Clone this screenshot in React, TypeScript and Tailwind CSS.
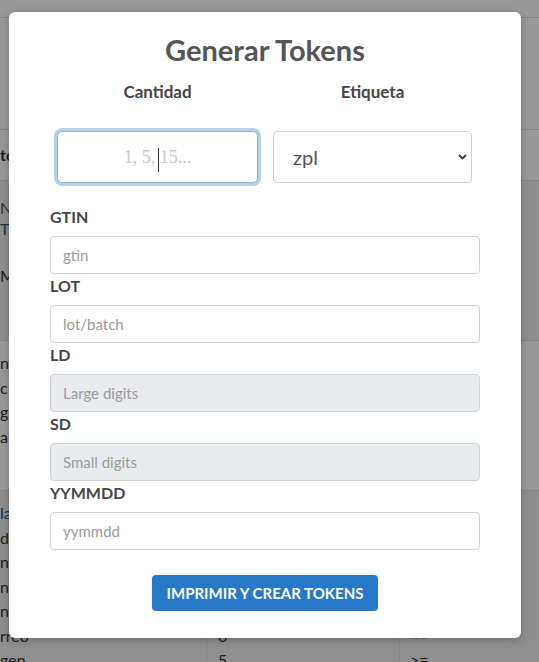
import React from "react";

// ============================================
// Generar Tokens modal over a dimmed table page
// ============================================

const Line: React.FC<{ children?: React.ReactNode; className?: string }> = ({
  children,
  className,
}) => <div className={`h-[24.5px] leading-[24.5px] ${className ?? ""}`}>{children}</div>;

const Field: React.FC<{
  label: string;
  placeholder: string;
  disabled?: boolean;
}> = ({ label, placeholder, disabled }) => (
  <div>
    <label className="block text-[16px] leading-[24px] font-bold text-[#454545] mb-[7px]">
      {label}
    </label>
    <input
      type="text"
      placeholder={placeholder}
      disabled={disabled}
      className={`block w-full h-[38px] rounded-[4px] border border-[#ced4da] px-[12px] text-[15px] text-[#495057] placeholder:text-[#9a9a9a] outline-none ${
        disabled ? "bg-[#e9ecef]" : "bg-white"
      }`}
    />
  </div>
);

export default function App() {
  return (
    <div className="relative h-[662px] w-full overflow-hidden bg-white font-['Lato',sans-serif] text-[16px] text-[#333]">
      {/* Página de fondo (tabla) */}
      <div className="flex flex-col">
        <div className="h-[18px] border-b border-[#dedede]" />
        <div className="h-[112px] border-b border-[#dedede]" />
        <div className="h-[51px] border-b border-[#dedede] flex items-center font-bold">
          to
        </div>
        <div className="h-[160px] border-b border-[#dedede] bg-[#eeeeee] pt-[16px]">
          <div className="leading-[21px] text-[#555]">N</div>
          <div className="leading-[21px] text-[#1f4f8f]">T</div>
          <div className="leading-[21px] mt-[26px]">MN</div>
        </div>
        <div className="h-[150px] border-b border-[#dedede] pt-[10px]">
          <Line>n</Line>
          <Line>c</Line>
          <Line>g</Line>
          <Line>a</Line>
        </div>
        <div className="flex bg-[#eeeeee] pt-[10px] h-[200px]">
          <div className="w-[207px] border-r border-[#dedede]">
            <Line className="text-[#1f4f8f]">la</Line>
            <Line>d</Line>
            <Line>nt</Line>
            <Line>nt</Line>
            <Line>nt</Line>
            <Line>rreo</Line>
            <Line>gen</Line>
          </div>
          <div className="w-[193px] border-r border-[#dedede] pl-[11px]">
            <Line>1</Line>
            <Line>1</Line>
            <Line>1</Line>
            <Line>1</Line>
            <Line>1</Line>
            <Line>0</Line>
            <Line>5</Line>
          </div>
          <div className="flex-1 pl-[10px]">
            <Line>==</Line>
            <Line>==</Line>
            <Line>==</Line>
            <Line>==</Line>
            <Line>==</Line>
            <Line>==</Line>
            <Line>&gt;=</Line>
          </div>
        </div>
      </div>

      {/* Overlay + modal */}
      <div className="absolute inset-0 bg-black/40">
        <div className="ml-[9px] mt-[12px] w-[512px] h-[626px] rounded-[6px] bg-white shadow-[0_2px_8px_rgba(0,0,0,0.25)] px-[41px] pt-[21px]">
          <h2 className="text-center text-[29px] leading-[34px] font-bold text-[#555]">
            Generar Tokens
          </h2>

          <div className="mt-[13px] grid grid-cols-2">
            <div className="px-[7px]">
              <div className="text-center text-[17px] leading-[24px] font-bold text-[#454545]">
                Cantidad
              </div>
              <div className="relative mt-[27px]">
                <input
                  type="text"
                  placeholder="1, 5, 15..."
                  className="block w-full h-[52px] rounded-[5px] border border-[#8fb6d8] ring-[3px] ring-[#b6d0e6] bg-white text-center text-[18px] font-['Liberation_Serif',serif] placeholder:text-[#c8c8c8] outline-none"
                />
                <span className="absolute left-[101px] top-[17px] h-[24px] w-px bg-[#333]" />
              </div>
            </div>
            <div className="px-[8px]">
              <div className="text-center text-[17px] leading-[24px] font-bold text-[#454545]">
                Etiqueta
              </div>
              <div className="relative mt-[27px]">
                <select
                  defaultValue="zpl"
                  className="block w-full h-[52px] appearance-none rounded-[4px] border border-[#ced4da] bg-white pl-[19px] text-[20px] text-[#555] outline-none"
                >
                  <option value="zpl">zpl</option>
                  <option value="pdf">pdf</option>
                </select>
                <svg
                  className="pointer-events-none absolute right-[5px] top-[23px]"
                  width="9"
                  height="6"
                  viewBox="0 0 9 6"
                  fill="none"
                >
                  <path d="M1 1l3.5 3.5L8 1" stroke="#333" strokeWidth="1.8" />
                </svg>
              </div>
            </div>
          </div>

          <div className="mt-[22px]">
            <Field label="GTIN" placeholder="gtin" />
            <Field label="LOT" placeholder="lot/batch" />
            <Field label="LD" placeholder="Large digits" disabled />
            <Field label="SD" placeholder="Small digits" disabled />
            <Field label="YYMMDD" placeholder="yymmdd" />
          </div>

          <button
            type="button"
            className="mx-auto mt-[25px] block w-[226px] h-[36px] rounded-[4px] bg-[#2878c8] text-[15px] font-bold uppercase text-white"
          >
            Imprimir y crear tokens
          </button>
        </div>
      </div>
    </div>
  );
}
